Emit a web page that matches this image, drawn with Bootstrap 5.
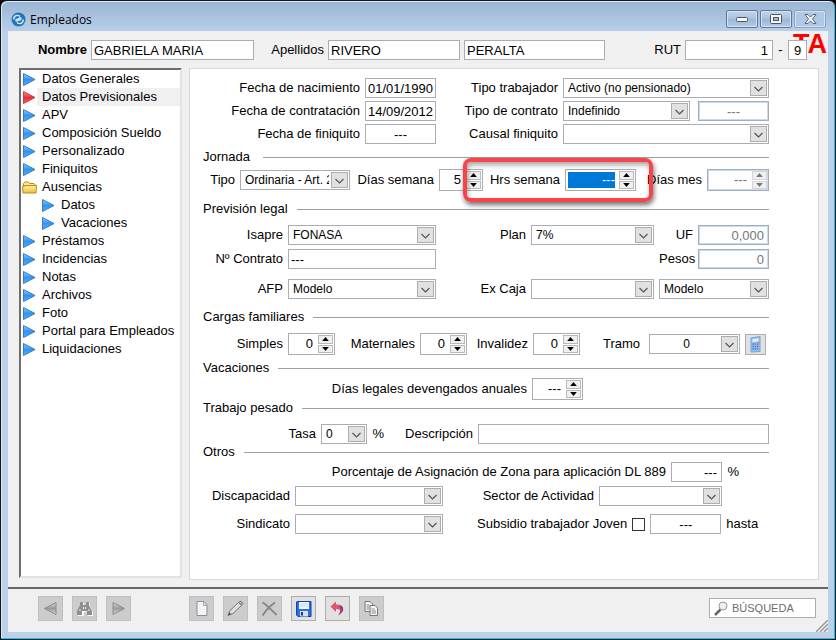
<!DOCTYPE html>
<html lang="es">
<head>
<meta charset="utf-8">
<meta name="viewport" content="width=device-width, initial-scale=1">
<title>Empleados</title>
<link href="https://cdn.jsdelivr.net/npm/bootstrap@5.3.0/dist/css/bootstrap.min.css" rel="stylesheet">
<style>
body{background:#0b0b0b;color:#000;font:13px/16px "Liberation Sans",Arial,sans-serif}
.win{min-height:100vh;border:1px solid #15151c;border-radius:7px 7px 0 0;background:linear-gradient(#9ab4d4,#b9d1ea 32px);box-shadow:inset -1px -1px #19c5e4,inset 1px 1px #dbe8f6;padding:0 7px 7px}
.titlebar{height:30px;padding:7px 2px 0 3px;font-family:"Open Sans","Noto Sans",sans-serif;font-size:12px}
.wbtns{gap:2px}
.wbtn{width:32px;height:18px;border:1px solid #5d7898;border-radius:2px;background:linear-gradient(#c3d5ea,#a9c0dc 50%,#9db7d6 51%,#b4cbe5);box-shadow:inset 0 0 0 1px #d3e1f1}
.wbtn.closer{border-color:#8ba5c4;background:#b0c8e3}
.client{background:#f0f0f0}
.head-grid{display:grid;grid-template-columns:79px 163fr 66px 132fr 141fr 72px 88px 7px 19px;gap:4px;padding:9px 21px 8px 0;align-items:center;text-align:right;position:relative}
.stamp{position:absolute;right:1px;top:0;font-size:27px;line-height:27px;font-weight:bold;color:#f00}
.fld,.pick{width:100%;min-width:0;height:20px;border:1px solid #abadb3;border-radius:0;background-color:#fff;color:#000;padding:0 2px;font-size:13px;line-height:18px;outline:0;position:relative}
.fld.text-end{padding-right:4px}
.pick{appearance:none;font-size:12px;padding:0 20px 0 4px;background:#fff url("data:image/svg+xml,%3Csvg xmlns='http://www.w3.org/2000/svg' width='17' height='16'%3E%3Crect x='.5' y='.5' width='16' height='15' fill='%23e1e1e1' stroke='%23adadad'/%3E%3Cpath d='M4.500 7l4 4 4-4' fill='none' stroke='%23555' stroke-width='1.200'/%3E%3C/svg%3E") no-repeat right 1px center}
.off{border-color:#a3aebd;box-shadow:inset 0 0 0 1px #c5dcf3;color:#777}
.side{width:163px;margin-left:11px;margin-bottom:2px;background:#fff;border:2px solid #6d6d6d;border-right-color:#e3e3e3;border-bottom-color:#e3e3e3}
.side a{height:18px;color:#000;text-decoration:none;padding-left:1px}
.side svg{width:15px;height:15px;flex:none;margin:2px 0 0 0}
.side span{flex:1;padding:1px 0 1px 5px;white-space:nowrap}
.side .on span{background:#f0f0f0}
.side .sub{padding-left:20px}
.panel{min-width:0;margin:0 9px 0 7px;border:1px solid #d9d9d9;background:#fff;padding:9px 49px 45px 13px}
.row-g{display:grid;gap:3px 5px;align-items:center;text-align:right;white-space:nowrap}
.g-dates{grid-template-columns:157px 71px 117px minmax(0,1fr)}
.g-contract{grid-template-columns:minmax(0,1fr) 71px;column-gap:8px}
.g-jornada{grid-template-columns:32px 110px 79px 44px 148px 61px minmax(0,1fr)}
.g-hrs{grid-template-columns:72px 71px;position:relative}
.g-prev{grid-template-columns:80px 148px 85px 123px minmax(0,1fr);row-gap:4px}
.g-tail{grid-template-columns:minmax(0,1fr) 71px}
.g-cargas{grid-template-columns:80px 47px 75px 47px 56px 47px 59px minmax(0,1fr) 21px;padding-right:3px}
.g-vac{grid-template-columns:324px 51px}
.g-tasa{grid-template-columns:113px 46px 12px 84px minmax(0,1fr)}
.g-zona{grid-template-columns:463px 51px 12px}
.g-otros{grid-template-columns:87px 148px 146px 123px}
.g-joven{grid-template-columns:87px 148px auto 13px 71px auto;justify-content:start}
.g-joven .lbl{margin-left:29px}
.sec{display:flex;align-items:center;gap:9px}
.sec::after{content:"";height:1px;flex:1;background:#a0a0a0}
.t2{margin-top:2px}.t5{margin-top:5px}.t10{margin-top:10px}
.spin{display:flex;height:22px;border:1px solid #abadb3;background:#fff;padding:1px 1px 1px 2px}
.spin input{flex:1;width:0;min-width:0;border:0;padding:0 5px 0 0;text-align:right;font-size:13px;color:#000;background:none;outline:0;margin:1px 0}
.spin div{width:15px;display:flex;flex-direction:column;gap:1px}
.spin button{flex:1;border:1px solid #b9b9b9;background:#f0f0f0;padding:0;display:flex;align-items:center;justify-content:center}
.spin.off{border-color:#a3aebd}.spin.off input{color:#777}.spin.off button{color:#777;border-color:#d5d5d5}
.spin.live input{background:#0078d7;color:#fff;padding:0;margin-right:4px}
.ring{position:absolute;inset:-11px -17px -11px -25px;border:4px solid #f7444a;border-radius:8px;box-shadow:1px 3px 5px rgba(0,0,0,.55),inset 1px 3px 5px rgba(0,0,0,.35);pointer-events:none;z-index:2}
.tick{appearance:none;width:13px;height:13px;border:1px solid #333;background:#fff;margin:0}
.calc{width:21px;height:21px;border:1px solid #adadad;background:#e1e1e1;padding:0;display:flex;align-items:center;justify-content:center}
.foot{border-top:2px solid #666;height:45px;margin-top:7px;padding:7px 12px 0 30px;position:relative}
.tool{width:25px;height:25px;border:1px solid #bfbfbf;background:#ccc;padding:0;display:flex;align-items:center;justify-content:center}
.tool.act{border-color:#adadad;background:#e1e1e1}
.gap9{gap:9px}
.toolset{margin-left:58px}
.search{width:107px;height:20px;border:1px solid #abadb3;background:#fff;margin-top:2px}
.search input{width:0;flex:1;border:0;outline:0;padding:0;font-size:11px;color:#6d6d6d;background:none}
.search input::placeholder{color:#6d6d6d;opacity:1}
.grip{position:absolute;right:0;bottom:0}
</style>
<script src="https://cdn.jsdelivr.net/npm/bootstrap@5.3.0/dist/js/bootstrap.bundle.min.js"></script>
</head>
<body>
<svg class="position-absolute" width="0" height="0" aria-hidden="true">
<defs>
<linearGradient id="gb" x1="0" y1="0" x2="0" y2="1"><stop offset="0" stop-color="#8fd0ff"/><stop offset=".5" stop-color="#2f94f5"/><stop offset="1" stop-color="#52b0ff"/></linearGradient>
<linearGradient id="gr" x1="0" y1="0" x2="0" y2="1"><stop offset="0" stop-color="#ff8f8f"/><stop offset=".5" stop-color="#f02a3a"/><stop offset="1" stop-color="#ff5a5a"/></linearGradient>
<linearGradient id="gg" x1="0" y1="0" x2="0" y2="1"><stop offset="0" stop-color="#ddd"/><stop offset=".5" stop-color="#9a9a9a"/><stop offset="1" stop-color="#ddd"/></linearGradient>
<linearGradient id="gy" x1="0" y1="0" x2="0" y2="1"><stop offset="0" stop-color="#fff2a0"/><stop offset="1" stop-color="#eebd3d"/></linearGradient>
</defs>
<symbol id="tri" viewBox="0 0 15 15"><path d="M1.500 1.500L13 7.500 1.500 13.500z" fill="url(#gb)" stroke="#3f78c0"/></symbol>
<symbol id="trired" viewBox="0 0 15 15"><path d="M1.500 1.500L13 7.500 1.500 13.500z" fill="url(#gr)" stroke="#c0404e"/></symbol>
<symbol id="folder" viewBox="0 0 15 15"><path d="M1.500 12V3.500L3 2h3l1.500 1.500H12L13.500 5v7z" fill="#ffe98a" stroke="#b98a1c"/><path d="M.5 6.500h2v-1h12l-.5 7.500H1z" fill="url(#gy)" stroke="#b98a1c"/></symbol>
<symbol id="up" viewBox="0 0 5 3"><path d="M0 3L2.500 0 5 3z" fill="currentColor"/></symbol>
<symbol id="dn" viewBox="0 0 5 3"><path d="M0 0h5L2.500 3z" fill="currentColor"/></symbol>
</svg>

<div class="win d-flex flex-column">
  <header class="titlebar d-flex">
    <svg class="mt-1 me-1" width="15" height="15" viewBox="0 0 15 15"><circle cx="7.500" cy="7.500" r="7" fill="#1f76b8"/><path d="M3 7.500C2 4.500 6 2 9 4.500M12 7.500c1 3-3 5.500-6 3M4.500 8.500c2 2 3.500-2 6-.5M10.500 6.500c-2-2-3.500 2-6 .5" fill="none" stroke="#dceefa" stroke-width="1.300"/></svg>
    <span class="pt-1">Empleados</span>
    <div class="ms-auto d-flex wbtns t2">
      <button class="wbtn p-0 d-flex align-items-center justify-content-center" aria-label="Minimizar"><svg width="12" height="5"><rect x=".5" y=".5" width="11" height="4" rx="1" fill="#f6f6f6" stroke="#4c5566"/></svg></button>
      <button class="wbtn p-0 d-flex align-items-center justify-content-center" aria-label="Maximizar"><svg width="12" height="10"><rect x=".5" y=".5" width="11" height="9" rx="1" fill="#f6f6f6" stroke="#4c5566"/><rect x="3.500" y="3.500" width="5" height="3" fill="#a9c0dc" stroke="#4c5566"/></svg></button>
      <button class="wbtn closer p-0 d-flex align-items-center justify-content-center" aria-label="Cerrar"><svg width="13" height="10"><path d="M1 .5h3l2.500 2.500L9 .5h3L8.500 5l3.500 4.500H9L6.500 7 4 9.500H1L4.500 5z" fill="#eef2f7" stroke="#5a6577"/></svg></button>
    </div>
  </header>

  <div class="client flex-fill d-flex flex-column">
    <div class="head-grid">
      <div class="stamp">TA</div>
      <label class="fw-bold" for="nom">Nombre</label><input class="fld" id="nom" value="GABRIELA MARIA">
      <label for="ape">Apellidos</label><input class="fld" id="ape" value="RIVERO">
      <input class="fld" aria-label="Segundo apellido" value="PERALTA">
      <label for="rut">RUT</label><input class="fld text-end" id="rut" value="1">
      <span class="text-center">-</span><input class="fld text-center" aria-label="Dígito verificador" value="9">
    </div>

    <div class="d-flex flex-fill">
      <nav class="side d-flex flex-column flex-shrink-0" aria-label="Secciones">
        <a class="d-flex" href="#"><svg><use href="#tri"/></svg><span>Datos Generales</span></a>
        <a class="d-flex on" href="#"><svg><use href="#trired"/></svg><span>Datos Previsionales</span></a>
        <a class="d-flex" href="#"><svg><use href="#tri"/></svg><span>APV</span></a>
        <a class="d-flex" href="#"><svg><use href="#tri"/></svg><span>Composición Sueldo</span></a>
        <a class="d-flex" href="#"><svg><use href="#tri"/></svg><span>Personalizado</span></a>
        <a class="d-flex" href="#"><svg><use href="#tri"/></svg><span>Finiquitos</span></a>
        <a class="d-flex" href="#"><svg><use href="#folder"/></svg><span>Ausencias</span></a>
        <a class="d-flex sub" href="#"><svg><use href="#tri"/></svg><span>Datos</span></a>
        <a class="d-flex sub" href="#"><svg><use href="#tri"/></svg><span>Vacaciones</span></a>
        <a class="d-flex" href="#"><svg><use href="#tri"/></svg><span>Préstamos</span></a>
        <a class="d-flex" href="#"><svg><use href="#tri"/></svg><span>Incidencias</span></a>
        <a class="d-flex" href="#"><svg><use href="#tri"/></svg><span>Notas</span></a>
        <a class="d-flex" href="#"><svg><use href="#tri"/></svg><span>Archivos</span></a>
        <a class="d-flex" href="#"><svg><use href="#tri"/></svg><span>Foto</span></a>
        <a class="d-flex" href="#"><svg><use href="#tri"/></svg><span>Portal para Empleados</span></a>
        <a class="d-flex" href="#"><svg><use href="#tri"/></svg><span>Liquidaciones</span></a>
      </nav>

      <main class="panel flex-fill">
        <div class="row-g g-dates">
          <label for="fn">Fecha de nacimiento</label><input class="fld text-center px-0" id="fn" value="01/01/1990">
          <label for="tt">Tipo trabajador</label><select class="pick" id="tt"><option>Activo (no pensionado)</option></select>
          <label for="fc">Fecha de contratación</label><input class="fld text-center px-0" id="fc" value="14/09/2012">
          <label for="tc">Tipo de contrato</label>
          <div class="row-g g-contract"><select class="pick" id="tc"><option>Indefinido</option></select><input class="fld off text-center" aria-label="Término de contrato" value="---"></div>
          <label for="ff">Fecha de finiquito</label><input class="fld text-center" id="ff" value="---">
          <label for="cf">Causal finiquito</label><select class="pick" id="cf"><option></option></select>
        </div>

        <div class="sec t5"><span class="me-1">Jornada</span></div>
        <div class="row-g g-jornada mt-1">
          <label for="tj">Tipo</label><select class="pick" id="tj"><option>Ordinaria - Art. 22</option></select>
          <label for="ds">Días semana</label>
          <div class="spin"><input id="ds" value="5"><div><button aria-label="Más"><svg width="7" height="4"><use href="#up"/></svg></button><button aria-label="Menos"><svg width="7" height="4"><use href="#dn"/></svg></button></div></div>
          <div class="row-g g-hrs">
            <label for="hs">Hrs semana</label>
            <div class="spin live"><input id="hs" value="---"><div><button aria-label="Más"><svg width="7" height="4"><use href="#up"/></svg></button><button aria-label="Menos"><svg width="7" height="4"><use href="#dn"/></svg></button></div></div>
            <div class="ring"></div>
          </div>
          <label for="dm">Días mes</label>
          <div class="spin off"><input id="dm" value="---"><div><button aria-label="Más"><svg width="7" height="4"><use href="#up"/></svg></button><button aria-label="Menos"><svg width="7" height="4"><use href="#dn"/></svg></button></div></div>
        </div>

        <div class="sec t10"><span>Previsión legal</span></div>
        <div class="row-g g-prev mt-2">
          <label for="isa">Isapre</label><select class="pick" id="isa"><option>FONASA</option></select>
          <label for="plan">Plan</label><select class="pick" id="plan"><option>7%</option></select>
          <div class="row-g g-tail"><label for="uf">UF</label><input class="fld off text-end" id="uf" value="0,000"></div>
          <label for="nc">Nº Contrato</label><input class="fld" id="nc" value="---">
          <span></span><span></span>
          <div class="row-g g-tail"><label for="pes">Pesos</label><input class="fld off text-end" id="pes" value="0"></div>
        </div>
        <div class="row-g g-prev t10">
          <label for="afp">AFP</label><select class="pick" id="afp"><option>Modelo</option></select>
          <label for="exc">Ex Caja</label><select class="pick" id="exc"><option></option></select>
          <select class="pick" aria-label="Administradora"><option>Modelo</option></select>
        </div>

        <div class="sec t10"><span>Cargas familiares</span></div>
        <div class="row-g g-cargas mt-2">
          <label for="sim">Simples</label>
          <div class="spin"><input id="sim" value="0"><div><button aria-label="Más"><svg width="7" height="4"><use href="#up"/></svg></button><button aria-label="Menos"><svg width="7" height="4"><use href="#dn"/></svg></button></div></div>
          <label for="mat">Maternales</label>
          <div class="spin"><input id="mat" value="0"><div><button aria-label="Más"><svg width="7" height="4"><use href="#up"/></svg></button><button aria-label="Menos"><svg width="7" height="4"><use href="#dn"/></svg></button></div></div>
          <label for="inv">Invalidez</label>
          <div class="spin"><input id="inv" value="0"><div><button aria-label="Más"><svg width="7" height="4"><use href="#up"/></svg></button><button aria-label="Menos"><svg width="7" height="4"><use href="#dn"/></svg></button></div></div>
          <label class="pe-1" for="tra">Tramo</label><select class="pick text-center" id="tra"><option>0</option></select>
          <button class="calc" aria-label="Calcular"><svg width="13" height="17" viewBox="0 0 13 17"><path d="M2 2l9-1.500v15L2 16z" fill="#9cc4f3" stroke="#6fa0dc"/><path d="M3.500 3.500l6-1v2.500l-6 1z" fill="#e4f1ff"/><path d="M3.500 8h6M3.500 10.500h6M3.500 13h6" stroke="#4774c4" stroke-width="1.500" stroke-dasharray="1.500 .7"/><rect x="8" y="6" width="2" height="2" fill="#f08a4a"/></svg></button>
        </div>

        <div class="sec t5"><span>Vacaciones</span></div>
        <div class="row-g g-vac t2">
          <label for="dl">Días legales devengados anuales</label>
          <div class="spin"><input id="dl" value="---"><div><button aria-label="Más"><svg width="7" height="4"><use href="#up"/></svg></button><button aria-label="Menos"><svg width="7" height="4"><use href="#dn"/></svg></button></div></div>
        </div>

        <div class="sec"><span>Trabajo pesado</span></div>
        <div class="row-g g-tasa mt-2">
          <label for="tas">Tasa</label><select class="pick" id="tas"><option>0</option></select><span>%</span>
          <label for="des">Descripción</label><input class="fld" id="des">
        </div>

        <div class="sec"><span>Otros</span></div>
        <div class="row-g g-zona t2">
          <label for="paz">Porcentaje de Asignación de Zona para aplicación DL 889</label><input class="fld text-end" id="paz" value="---"><span>%</span>
        </div>
        <div class="row-g g-otros mt-1">
          <label for="dis">Discapacidad</label><select class="pick" id="dis"><option></option></select>
          <label for="sec">Sector de Actividad</label><select class="pick" id="sec"><option></option></select>
        </div>
        <div class="row-g g-joven mt-2">
          <label for="sin">Sindicato</label><select class="pick" id="sin"><option></option></select>
          <label class="lbl" for="stj">Subsidio trabajador Joven</label><input class="tick" type="checkbox" id="stj">
          <input class="fld text-center" id="has" aria-label="Fecha de subsidio" value="---"><label for="has">hasta</label>
        </div>
      </main>
    </div>

    <footer class="foot d-flex align-items-start">
      <div class="d-flex gap9">
        <button class="tool" aria-label="Anterior"><svg width="15" height="15"><path d="M13 1.500v12L1.500 7.500z" fill="url(#gg)" stroke="#8a8a8a"/></svg></button>
        <button class="tool" aria-label="Buscar"><svg width="17" height="15"><path d="M4 1h3v3h3V1h3v3l3 6v4h-5v-4H7v4H1v-4l3-6z" fill="#fff" transform="translate(.8 .8)"/><path d="M4 1h3v3h3V1h3v3l3 6v4h-5v-4H6v4H1v-4l3-6z" fill="#8f8f8f"/><path d="M3 9h2M12 9h2M7.500 6v2M9.500 6v2" stroke="#eee"/></svg></button>
        <button class="tool" aria-label="Siguiente"><svg width="15" height="15"><path d="M2 1.500v12l11.500-6z" fill="url(#gg)" stroke="#8a8a8a"/></svg></button>
      </div>
      <div class="d-flex gap9 toolset">
        <button class="tool" aria-label="Nuevo"><svg width="12" height="15"><path d="M1 .5h7L11 4v10.500H1z" fill="#f4f4f4" stroke="#8d8a9c"/><path d="M7.500 1v3.500H11" fill="#ddd" stroke="#a9a6b6"/></svg></button>
        <button class="tool" aria-label="Editar"><svg width="17" height="17"><path d="M1 15.500l2-5 8.500-8 3 3-8.500 8z" fill="#dedede" stroke="#777"/><path d="M11.500 2.500l2-1.500 2.500 2.500-1.500 2z" fill="#aaa" stroke="#777"/><path d="M1 15.500l1.500-3 1.500 1.500z" fill="#444"/></svg></button>
        <button class="tool" aria-label="Eliminar"><svg width="17" height="16"><path d="M1.500 1.500c5 3 9.500 8 14 12.500M14 1.500C9 5 5 9 1.500 14.500" stroke="#858585" stroke-width="1.800" fill="none"/></svg></button>
        <button class="tool act" aria-label="Guardar"><svg width="16" height="16"><path d="M1 .5h14v15H2L.5 14V1z" fill="#2a6fe8" stroke="#173f9c"/><rect x="3" y="1" width="10" height="7" fill="#f2f8ff"/><path d="M4 3h8M4 5h8" stroke="#bcd6f5"/><rect x="4" y="10" width="8" height="5.500" fill="#d5e2ee"/><rect x="5" y="11" width="2" height="3.500" fill="#173f9c"/></svg></button>
        <button class="tool act" aria-label="Deshacer"><svg width="16" height="15"><path d="M6 .5v3c8-.5 10 6.500 2 11C11.500 10 10.500 8 6 8v3L.5 5.500z" fill="#dd5566"/><path d="M11 4.500c4 2.500 2.500 7-3 10 3-3.500 4-7 1-8z" fill="#8b3f86"/></svg></button>
        <button class="tool" aria-label="Copiar"><svg width="15" height="15"><path d="M1 .5h5L8.500 3v7.500H1z" fill="#f4f4f4" stroke="#777"/><path d="M2.500 4h3M2.500 6h3M2.500 8h3" stroke="#888"/><path d="M6 4.500h5L13.500 7v7.500H6z" fill="#f4f4f4" stroke="#777"/><path d="M7.500 8h3M7.500 10h4.500M7.500 12h4.500" stroke="#888"/></svg></button>
      </div>
      <div class="search ms-auto d-flex align-items-center">
        <svg class="mx-1" width="14" height="15"><path d="M1 14l5.500-5.500" stroke="#666" stroke-width="2.500"/><circle cx="9" cy="5" r="4" fill="#eee" stroke="#999"/></svg>
        <input type="search" aria-label="Búsqueda" placeholder="BÚSQUEDA">
      </div>
      <svg class="grip" width="12" height="12"><path d="M0 12L12 0M4 12l8-8M8 12l4-4" stroke="#999" stroke-width="1.500"/></svg>
    </footer>
  </div>
</div>
</body>
</html>
